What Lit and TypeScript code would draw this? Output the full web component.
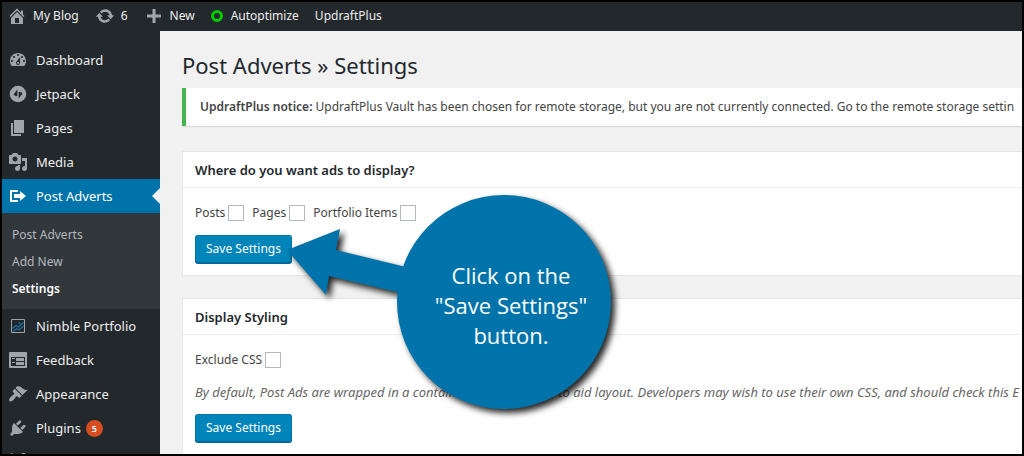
import { LitElement, html, css, svg } from "lit";
import { customElement, property } from "lit/decorators.js";

const ICONS: Record<string, unknown> = {
  home: svg`<path d="M16 8.5l1.53 1.53-1.06 1.06L10 4.6l-6.47 6.49-1.06-1.06L10 2.5l4 4v-2h2v4zm-6-2.46l6 5.99V18H4v-5.97zM12 17v-5H8v5h4z"/>`,
  update: svg`<path d="M10.2 3.28c3.53 0 6.43 2.61 6.92 6h2.08l-3.5 4-3.5-4h2.32c-.45-1.97-2.21-3.45-4.32-3.45-1.45 0-2.73.71-3.54 1.78L4.95 5.66C6.23 4.2 8.11 3.28 10.2 3.28zm-.4 13.44c-3.52 0-6.43-2.61-6.92-6H.8l3.5-4c1.17 1.33 2.33 2.67 3.5 4H5.48c.45 1.97 2.21 3.45 4.32 3.45 1.45 0 2.73-.71 3.54-1.78l1.71 1.95c-1.28 1.46-3.15 2.38-5.25 2.38z"/>`,
  plus: svg`<path d="M17 8.5v3h-5.5V17h-3v-5.5H3v-3h5.5V3h3v5.5z"/>`,
  dashboard: svg`<path d="M3.76 16h12.48c1.1-1.37 1.76-3.11 1.76-5 0-4.42-3.58-8-8-8s-8 3.58-8 8c0 1.89.66 3.63 1.76 5zM10 4c.55 0 1 .45 1 1s-.45 1-1 1-1-.45-1-1 .45-1 1-1zM6 6c.55 0 1 .45 1 1s-.45 1-1 1-1-.45-1-1 .45-1 1-1zm8 0c.55 0 1 .45 1 1s-.45 1-1 1-1-.45-1-1 .45-1 1-1zm-5.37 5.55L12 7v6c0 1.1-.9 2-2 2s-2-.9-2-2c0-.57.24-1.08.63-1.45zM4 10c.55 0 1 .45 1 1s-.45 1-1 1-1-.45-1-1 .45-1 1-1zm12 0c.55 0 1 .45 1 1s-.45 1-1 1-1-.45-1-1 .45-1 1-1zm-5 3c0-.55-.45-1-1-1s-1 .45-1 1 .45 1 1 1 1-.45 1-1z"/>`,
  jetpack: svg`<path fill-rule="evenodd" d="M10 1.7a8.3 8.3 0 1 0 0 16.6a8.3 8.3 0 0 0 0-16.6zM9.4 5.5v6.7L7.3 11.7C5.8 11.3 5.5 10.6 6.2 9.4zM10.7 14.6V7.8l2.1.5c1.5.4 1.8 1.1 1.1 2.3z"/>`,
  pages: svg`<path d="M6 15V2h10v13H6zm-1 1h8v2H3V5h2v11z"/>`,
  media: svg`<path d="M13 11V4c0-.55-.45-1-1-1h-1.67L9 1H5L3.67 3H2c-.55 0-1 .45-1 1v7c0 .55.45 1 1 1h10c.55 0 1-.45 1-1zM7 4.5c1.38 0 2.5 1.12 2.5 2.5S8.38 9.5 7 9.5 4.5 8.38 4.5 7 5.62 4.5 7 4.5zM14 6h5v10.5c0 1.38-1.12 2.5-2.5 2.5S14 17.88 14 16.5s1.12-2.5 2.5-2.5c.17 0 .34.02.5.05V9h-3V6zm-4 8.05V13h2v3.5c0 1.38-1.12 2.5-2.5 2.5S7 17.88 7 16.5 8.12 14 9.5 14c.17 0 .34.02.5.05z"/>`,
  migrate: svg`<path d="M4 6h6V4H2v12.01h8V14H4V6zm2 2h6V5l6 5-6 5v-3H6V8z"/>`,
  portfolio: svg`<path d="M3.5 3.5h13v13h-13z" fill="#23282d" stroke="#a0a5aa"/><path d="M4.5 12.5l3.5-3 2.5 1.5 5-4.5M5 15.5l4-3 2 1.5 4.5-4" fill="none" stroke="#1c6e9c" stroke-width="1.3"/><circle cx="11.5" cy="7" r="1" fill="#1c6e9c"/>`,
  feedback: svg`<path d="M2 2h16c.55 0 1 .45 1 1v14c0 .55-.45 1-1 1H2c-.55 0-1-.45-1-1V3c0-.55.45-1 1-1zm15 14V7H3v9h14zM4 8v1h3V8H4zm4 0v3h8V8H8zm-4 4v1h3v-1H4zm4 0v3h8v-3H8z"/>`,
  appearance: svg`<path d="M14.48 11.06L7.41 3.99l1.5-1.5c.5-.56 2.3-.47 3.51.32 1.21.8 1.43 1.28 2.91 2.1 1.18.64 2.45 1.26 4.45.85zm-.71.71L6.7 4.7 4.93 6.47c-.39.39-.39 1.02 0 1.41l1.06 1.06c.39.39.39 1.03 0 1.42-.6.6-1.43 1.11-2.21 1.69-.35.26-.7.53-1.01.84C1.43 14.23.4 16.08 1.4 17.07c.99 1 2.84-.03 4.18-1.36.31-.31.58-.66.85-1.02.57-.78 1.08-1.61 1.69-2.21.39-.39 1.02-.39 1.41 0l1.06 1.06c.39.39 1.02.39 1.41 0z"/>`,
  plugins: svg`<path d="M13.11 4.36L9.87 7.6 8 5.73l3.24-3.24c.35-.34 1.05-.2 1.56.32.52.51.66 1.21.31 1.55zm-8 1.77l.91-1.12 9.01 9.01-1.19.84c-.71.71-2.63 1.16-3.82 1.16H6.14L4.9 17.26c-.59.59-1.54.59-2.12 0-.59-.58-.59-1.53 0-2.12l1.24-1.24v-3.88c0-1.13.4-3.19 1.09-3.89zm7.26 3.97l3.24-3.24c.34-.35 1.04-.21 1.55.31.52.51.66 1.21.31 1.55l-3.24 3.25z"/>`,
  tools: svg`<path d="M3.5 1l2.5 2 1 3 4 4-2 2-4-4-3-1-1-3zM13 2c1-1 3-1.3 4.5-.8L15 4l1 2 2.5-.5c.5 2-1 4.5-4 4.5l-8 8c-2 1.5-4-.5-3-2.5l8-8c0-2 .5-4.5 1.5-5.5z"/>`,
};

@customElement("dash-icon")
class DashIcon extends LitElement {
  @property() name = "";
  static styles = css`
    :host { display: block; width: 20px; height: 20px; flex: none; }
    .glyph { display: block; width: 100%; height: 100%; fill: currentColor; }
  `;
  render() {
    return html`<svg class="glyph" viewBox="0 0 20 20" aria-hidden="true">${ICONS[this.name]}</svg>`;
  }
}

@customElement("app-root")
class AppRoot extends LitElement {
  static styles = css`
    :host {
      display: block;
      box-sizing: border-box;
      height: 100vh;
      border: 2px solid #000;
      background: #f1f1f1;
      color: #444;
      font: 12px/20px "Noto Sans", "Open Sans", sans-serif;
      overflow: hidden;
      position: relative;
    }
    * { box-sizing: border-box; }
    a { color: inherit; text-decoration: none; }
    .shell { display: flex; flex-direction: column; height: 100%; }
    .bar {
      display: flex; flex: none; gap: 16px; align-items: center;
      height: 29px; padding: 0 5px; background: #23282d; color: #eee;
    }
    .bar a { display: flex; align-items: center; gap: 6px; padding-bottom: 2px; }
    .bar dash-icon { color: #a0a5aa; }
    .dot { width: 12px; height: 12px; margin-right: 2px; border: 3px solid #0c0; border-radius: 50%; }
    .body { display: flex; flex: 1; min-height: 0; }
    .side { flex: none; width: 158px; padding-top: 12px; background: #23282d; color: #eee; font-size: 13px; overflow: hidden; }
    .item { display: flex; align-items: center; gap: 8px; height: 34px; padding-left: 6px; position: relative; }
    .item dash-icon { color: #a0a5aa; }
    .current { background: #0073aa; color: #fff; }
    .current dash-icon { color: #fff; }
    .current::after {
      content: ""; position: absolute; right: 0; top: 9px;
      border: 8px solid transparent; border-left: 0; border-right-color: #f1f1f1;
    }
    .sub { background: #32373c; padding: 8px 0 7px; color: #b4b9be; font-size: 12px; }
    .sub a { display: block; padding-left: 10px; line-height: 27px; }
    .sub .on { color: #fff; font-weight: 600; }
    .count {
      min-width: 17px; height: 17px; margin-left: -3px; border-radius: 9px; background: #d54e21;
      color: #fff; font-size: 9px; font-weight: 600; line-height: 17px; text-align: center;
    }
    .main { flex: 1; min-width: 0; padding: 18px 0 0 22px; overflow: hidden; }
    h1 { margin: 0; color: #23282d; font-size: 22px; font-weight: 400; line-height: 32px; white-space: nowrap; }
    .notice {
      margin: 7px 0 25px; padding: 9px 14px; border-left: 4px solid #46b450; background: #fff;
      box-shadow: 0 1px 1px rgba(0, 0, 0, 0.1); white-space: nowrap;
    }
    .notice b { font-weight: 600; }
    .card { margin-bottom: 22px; border: 1px solid #e5e5e5; border-right: 0; background: #fff; }
    h2 { margin: 0; padding: 2px 12px 0; border-bottom: 1px solid #eee; color: #23282d; font-size: 13px; font-weight: 600; line-height: 33px; }
    .form { display: flex; flex-direction: column; align-items: flex-start; gap: 12px; padding: 15px 12px 12px; white-space: nowrap; }
    .form label { display: flex; align-items: center; gap: 3px; }
    .checks { display: flex; gap: 8px; }
    input { appearance: none; width: 16px; height: 16px; margin: 0; border: 1px solid #b4b9be; background: #fff; }
    .hint { margin: 0; color: #666; font-size: 13px; font-style: italic; }
    button {
      height: 28px; padding: 0 10px; border: 1px solid #0073aa; border-bottom-color: #006799; border-radius: 3px;
      background: #0085ba; box-shadow: 0 1px 0 #006799; color: #fff; font: inherit; line-height: 26px;
    }
    .callout { position: absolute; left: 278px; top: 185px; width: 350px; height: 235px; pointer-events: none; }
    .shape { display: block; width: 100%; height: 100%; fill: #0073aa; filter: drop-shadow(4px 4px 3px rgba(0, 0, 0, 0.85)); }
    .say {
      position: absolute; left: 124px; top: 11px; width: 214px; height: 214px; margin: 0;
      display: flex; align-items: center; justify-content: center;
      color: #fff; font-family: "Open Sans", sans-serif; font-size: 22px; line-height: 30px; text-align: center; white-space: nowrap;
    }
  `;

  item(icon: string, label: string, extra: unknown = "", current = false) {
    return html`<a class="item ${current ? "current" : ""}" href="#"><dash-icon name=${icon}></dash-icon><span>${label}</span>${extra}</a>`;
  }

  top(icon: string, label: string) {
    return html`<a href="#">${icon ? html`<dash-icon name=${icon}></dash-icon>` : ""}<span>${label}</span></a>`;
  }

  render() {
    return html`
      <div class="shell">
        <nav class="bar" aria-label="Toolbar">
          ${this.top("home", "My Blog")}${this.top("update", "6")}${this.top("plus", "New")}
          <a href="#"><span class="dot"></span><span>Autoptimize</span></a>${this.top("", "UpdraftPlus")}
        </nav>
        <div class="body">
          <nav class="side" aria-label="Main menu">
            ${this.item("dashboard", "Dashboard")}
            ${this.item("jetpack", "Jetpack")}
            ${this.item("pages", "Pages")}
            ${this.item("media", "Media")}
            ${this.item("migrate", "Post Adverts", "", true)}
            <div class="sub"><a href="#">Post Adverts</a><a href="#">Add New</a><a class="on" href="#">Settings</a></div>
            ${this.item("portfolio", "Nimble Portfolio")}
            ${this.item("feedback", "Feedback")}
            ${this.item("appearance", "Appearance")}
            ${this.item("plugins", "Plugins", html`<span class="count">5</span>`)}
            ${this.item("tools", "")}
          </nav>
          <main class="main">
            <h1>Post Adverts » Settings</h1>
            <div class="notice"><b>UpdraftPlus notice:</b> UpdraftPlus Vault has been chosen for remote storage, but you are not currently connected. Go to the remote storage settin</div>
            <section class="card">
              <h2>Where do you want ads to display?</h2>
              <div class="form">
                <div class="checks">
                  <label>Posts <input type="checkbox" /></label>
                  <label>Pages <input type="checkbox" /></label>
                  <label>Portfolio Items <input type="checkbox" /></label>
                </div>
                <button type="button">Save Settings</button>
              </div>
            </section>
            <section class="card">
              <h2>Display Styling</h2>
              <div class="form">
                <label>Exclude CSS <input type="checkbox" /></label>
                <p class="hint">By default, Post Ads are wrapped in a container with CSS styles to aid layout. Developers may wish to use their own CSS, and should check this E</p>
                <button type="button">Save Settings</button>
              </div>
            </section>
          </main>
        </div>
      </div>
      <div class="callout">
        <svg class="shape" viewBox="280 187 350 235" aria-hidden="true">
          <path d="M287 250L340 229L336 250L406 267L397 292L329 276L326 295Z" />
          <circle cx="504" cy="302" r="107" />
        </svg>
        <p class="say">Click on the<br />"Save Settings"<br />button.</p>
      </div>
    `;
  }
}
